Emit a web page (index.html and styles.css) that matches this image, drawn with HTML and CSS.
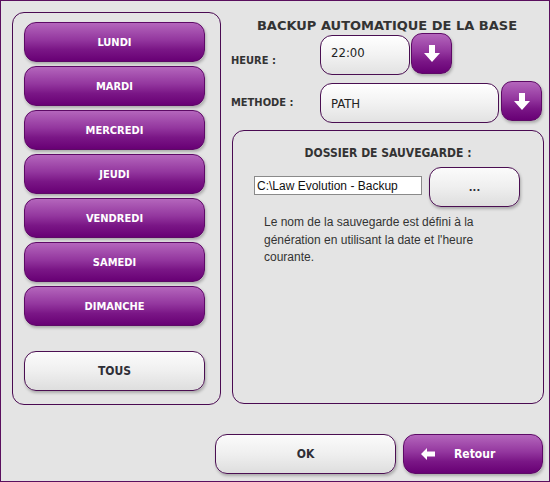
FILE: index.html
```html
<!DOCTYPE html>
<html lang="fr">
<head>
    <meta charset="UTF-8">
    <title>Backup automatique</title>
    <link rel="stylesheet" href="styles.css">
</head>
<body>
    <div class="window">
        <div class="main">
            <div class="days-panel">
                <button class="btn btn-purple day">LUNDI</button>
                <button class="btn btn-purple day">MARDI</button>
                <button class="btn btn-purple day">MERCREDI</button>
                <button class="btn btn-purple day">JEUDI</button>
                <button class="btn btn-purple day">VENDREDI</button>
                <button class="btn btn-purple day">SAMEDI</button>
                <button class="btn btn-purple day">DIMANCHE</button>
                <button class="btn btn-light day tous">TOUS</button>
            </div>

            <div class="settings">
                <h1 class="title">BACKUP AUTOMATIQUE DE LA BASE</h1>

                <div class="row row-heure">
                    <span class="label">HEURE :</span>
                    <div class="field field-heure">22:00</div>
                    <button class="btn btn-purple arrow-btn">
                        <svg width="16" height="17" viewBox="0 0 16 17"><path d="M5 0h6v8h5l-8 9l-8-9h5z" fill="#fff"/></svg>
                    </button>
                </div>

                <div class="row row-methode">
                    <span class="label">METHODE :</span>
                    <div class="field field-methode">PATH</div>
                    <button class="btn btn-purple arrow-btn">
                        <svg width="16" height="17" viewBox="0 0 16 17"><path d="M5 0h6v8h5l-8 9l-8-9h5z" fill="#fff"/></svg>
                    </button>
                </div>

                <div class="folder-panel">
                    <h2 class="folder-title">DOSSIER DE SAUVEGARDE :</h2>
                    <div class="folder-row">
                        <input class="path-input" type="text" value="C:\Law Evolution - Backup">
                        <button class="btn btn-light browse">...</button>
                    </div>
                    <p class="note">Le nom de la sauvegarde est défini à la génération en utilisant la date et l'heure courante.</p>
                </div>
            </div>
        </div>

        <div class="footer">
            <button class="btn btn-light ok">OK</button>
            <button class="btn btn-purple retour">
                <svg width="14" height="12" viewBox="0 0 14 12"><path d="M0 6l6-6v3.5h8v5h-8v3.5z" fill="#fff"/></svg>
                <span>Retour</span>
            </button>
        </div>
    </div>
</body>
</html>
```

FILE: styles.css
```css
* {
    box-sizing: border-box;
}

body {
    margin: 0;
    font-family: 'DejaVu Sans Condensed', 'DejaVu Sans', sans-serif;
    color: #333;
}

.window {
    width: 550px;
    height: 482px;
    background-color: #e4e4e4;
    border: 1px solid #5a0f5e;
    padding: 11px 6px 7px 11px;
    display: flex;
    flex-direction: column;
}

.main {
    display: flex;
    gap: 10px;
    height: 393px;
}

.btn {
    font-family: 'DejaVu Sans Condensed', 'DejaVu Sans', sans-serif;
    font-weight: bold;
    font-size: 11px;
    cursor: pointer;
    border-radius: 12px;
    padding: 0;
    box-shadow: 1px 2px 3px rgba(0, 0, 0, 0.25);
}

.btn-purple {
    color: white;
    border: 1px solid #5d0a66;
    background: linear-gradient(to bottom, #b466bc 0%, #93369e 45%, #7a1686 70%, #680075 100%);
}

.btn-light {
    color: #2e2e36;
    border: 1px solid #4b0f52;
    background: linear-gradient(to bottom, #fbfbfb 0%, #efefef 50%, #dedede 100%);
}

/* Jours */
.days-panel {
    width: 209px;
    height: 393px;
    border: 1px solid #4a0a52;
    border-radius: 12px;
    padding: 9px 0 0 11px;
    display: flex;
    flex-direction: column;
    gap: 4px;
}

.day {
    width: 181px;
    height: 40px;
    flex-shrink: 0;
}

.tous {
    margin-top: 21px;
    font-size: 12px;
}

/* Partie droite */
.settings {
    width: 312px;
    display: flex;
    flex-direction: column;
}

.title {
    margin: 6px 0 0 0;
    font-family: 'DejaVu Sans', sans-serif;
    font-size: 13px;
    font-weight: bold;
    text-align: center;
    color: #333;
    height: 15px;
    line-height: 15px;
    white-space: nowrap;
}

.row {
    display: flex;
    align-items: flex-start;
    flex-shrink: 0;
}

.row-heure {
    margin-top: 0;
}

.row-methode {
    margin-top: 6px;
}

.label {
    width: 89px;
    align-self: center;
    font-size: 11px;
    font-weight: bold;
    color: #333;
}

.row-heure .label {
    padding-top: 12px;
}

.field {
    height: 40px;
    margin-top: 2px;
    border: 1px solid #4a0f52;
    border-radius: 12px;
    background: linear-gradient(to bottom, #ffffff 0%, #f2f2f2 50%, #e2e2e2 100%);
    font-size: 13px;
    padding-left: 10px;
    display: flex;
    align-items: center;
    color: #222;
}

.field-heure {
    width: 90px;
    padding-bottom: 6px;
}

.field-methode {
    width: 179px;
}

.arrow-btn {
    width: 41px;
    height: 41px;
    margin-left: 1px;
    border-radius: 11px;
    display: flex;
    align-items: center;
    justify-content: center;
}

.row-methode .arrow-btn {
    margin-left: 2px;
    height: 40px;
}

.folder-panel {
    margin-top: 7px;
    margin-left: 1px;
    width: 312px;
    height: 274px;
    flex-shrink: 0;
    border: 1px solid #4a0a52;
    border-radius: 12px;
    padding: 15px 0 0 0;
}

.folder-title {
    margin: 0;
    font-size: 12px;
    font-weight: bold;
    text-align: center;
    color: #333;
}

.folder-row {
    display: flex;
    align-items: center;
    margin-top: 7px;
    padding-left: 21px;
    gap: 7px;
}

.path-input {
    width: 168px;
    height: 19px;
    margin-top: -3px;
    border: 1px solid #8a8a8a;
    background: white;
    font-family: 'Liberation Sans', Arial, sans-serif;
    font-size: 12px;
    padding: 0 2px;
    color: #111;
}

.browse {
    width: 91px;
    height: 40px;
    font-size: 11px;
}

.note {
    margin: 7px 0 0 31px;
    width: 262px;
    font-family: 'Liberation Sans', Arial, sans-serif;
    font-size: 12px;
    line-height: 17.5px;
    color: #333;
}

/* Boutons du bas */
.footer {
    display: flex;
    justify-content: flex-end;
    gap: 7px;
    margin-top: 29px;
}

.ok {
    width: 181px;
    height: 40px;
    font-size: 12px;
}

.retour {
    width: 140px;
    height: 40px;
    font-size: 12px;
    display: flex;
    align-items: center;
    padding-left: 17px;
    gap: 19px;
}
```
